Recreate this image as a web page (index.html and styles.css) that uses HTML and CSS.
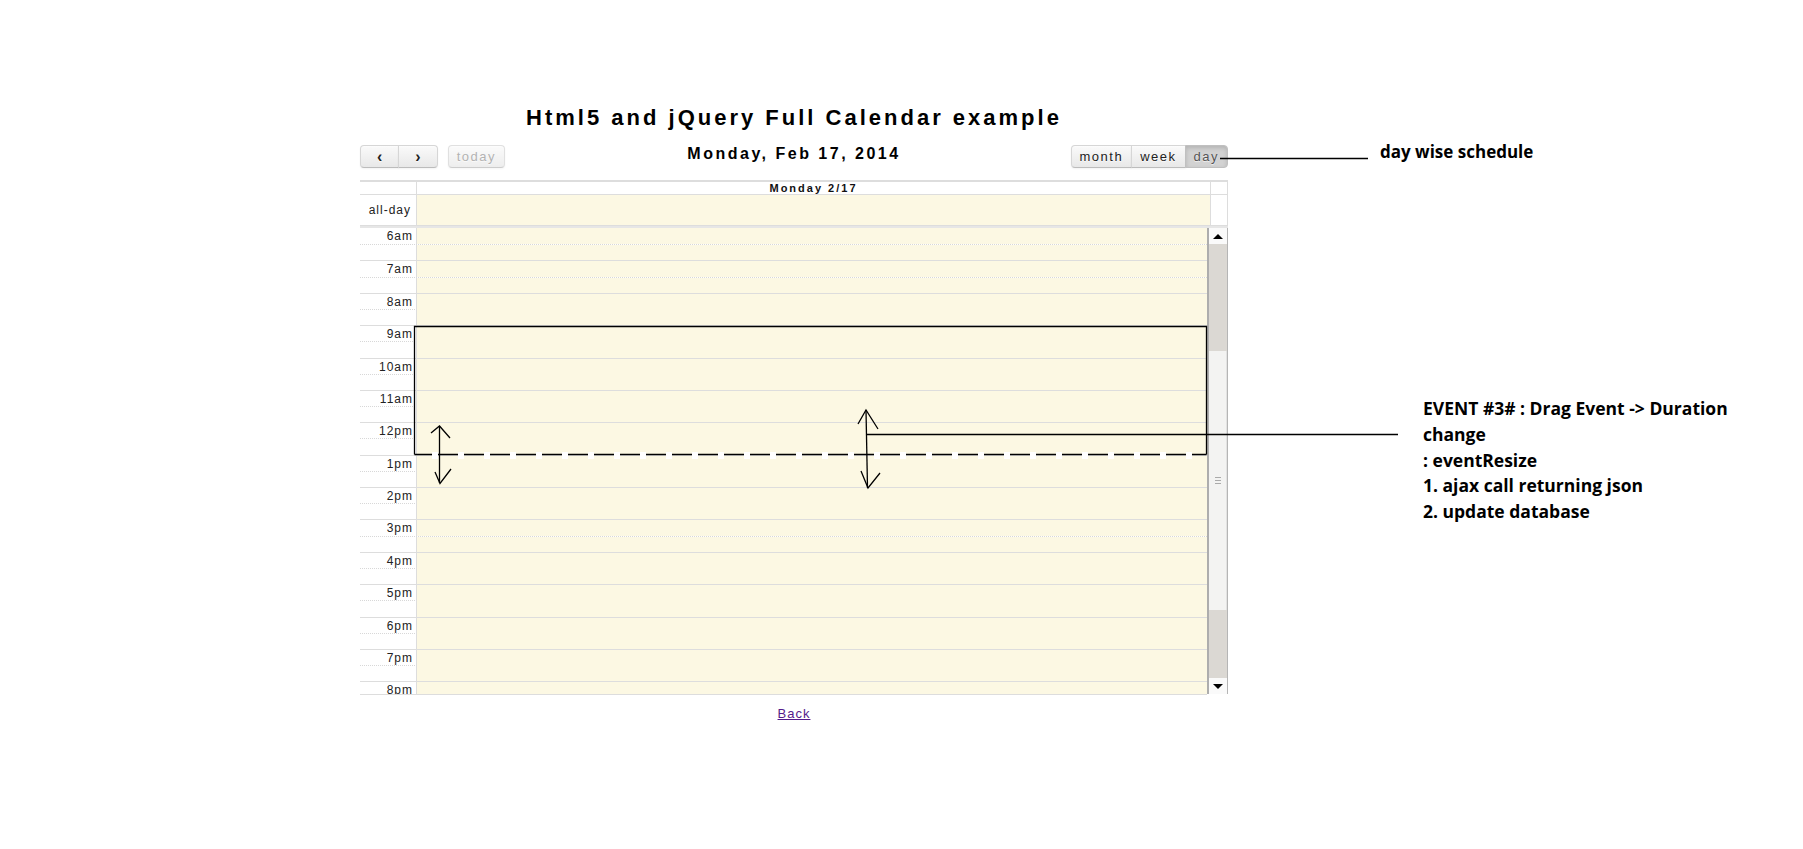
FILE: index.html
```html
<!DOCTYPE html>
<html lang="en">
  <head>
    <meta charset="UTF-8" />
    <meta name="viewport" content="width=device-width, initial-scale=1.0" />
    <title>Html5 and jQuery Full Calendar example</title>
    <link rel="stylesheet" href="styles.css">
  </head>
  <body>
    <div class="page">
      <h1>Html5 and jQuery Full Calendar example</h1>

      <div id="calendar" class="fc">
        <div class="fc-toolbar">
          <div class="fc-left">
            <span class="fc-group">
              <button class="fc-button corner-left">&lsaquo;</button><button class="fc-button corner-right">&rsaquo;</button>
            </span>
            <button class="fc-button fc-today corner-left corner-right">today</button>
          </div>
          <h2 class="fc-title">Monday, Feb 17, 2014</h2>
          <div class="fc-right">
            <span class="fc-group">
              <button class="fc-button fc-text corner-left">month</button><button class="fc-button fc-text">week</button><button class="fc-button fc-text fc-active corner-right">day</button>
            </span>
          </div>
        </div>

        <div class="fc-view">
          <div class="fc-row fc-head">
            <div class="fc-axis"></div>
            <div class="fc-day">Monday 2/17</div>
            <div class="fc-gutter"></div>
          </div>
          <div class="fc-row fc-allday">
            <div class="fc-axis">all-day</div>
            <div class="fc-day"></div>
            <div class="fc-gutter"></div>
          </div>
          <div class="fc-divider"></div>
          <div class="fc-body">
            <div class="fc-slots" id="slots"></div>
            <div class="scrollbar">
              <div class="scroll-btn"><span class="tri-up"></span></div>
              <div class="scroll-track">
                <div class="scroll-thumb"><span class="grip"></span></div>
              </div>
              <div class="scroll-btn"><span class="tri-down"></span></div>
            </div>
          </div>
        </div>
      </div>

      <p class="back"><a href="#">Back</a></p>
    </div>

    <!-- hand drawn notes on top of the screenshot -->
    <svg class="annotations" width="1803" height="849" viewBox="0 0 1803 849">
      <g fill="none" stroke="#000" stroke-width="1.3">
        <path d="M1220 158.5 H1368" />
        <path d="M414.5 454.5 V326.5 H1206.5 V454.5" />
        <path d="M414.5 454.5 H1206.5" stroke-width="1.5" />
      </g>
      <path d="M432 455.5 H1200" stroke="#fff" stroke-width="7" stroke-dasharray="6 20" fill="none" />
      <g fill="none" stroke="#000" stroke-width="1.3">
        <path d="M866 434.5 H1398" />
        <path d="M439.5 426 V483" />
        <path d="M431 433 L439.5 426 L450 438" />
        <path d="M435 472 L440 483.5 L451 469" />
        <path d="M866 410 L867.5 488" />
        <path d="M858 424 L866 410 L878 429" />
        <path d="M861 471 L868 488 L880 473" />
      </g>
    </svg>

    <div class="note note-day">day wise schedule</div>
    <div class="note note-event">
      EVENT #3# : Drag Event -&gt; Duration<br>
      change<br>
      : eventResize<br>
      1. ajax call returning json<br>
      2. update database
    </div>

    <script>
      const horas = [
        "6am", "7am", "8am", "9am", "10am", "11am", "12pm",
        "1pm", "2pm", "3pm", "4pm", "5pm", "6pm", "7pm", "8pm",
      ];

      const slots = document.getElementById("slots");

      horas.forEach((hora) => {
        const cheia = document.createElement("div");
        cheia.className = "fc-slot fc-hour";
        const th = document.createElement("div");
        th.className = "fc-axis";
        th.textContent = hora;
        const td = document.createElement("div");
        td.className = "fc-cell";
        cheia.appendChild(th);
        cheia.appendChild(td);

        const meia = document.createElement("div");
        meia.className = "fc-slot fc-half";
        meia.innerHTML = '<div class="fc-axis"></div><div class="fc-cell"></div>';

        slots.appendChild(cheia);
        slots.appendChild(meia);
      });
    </script>
  </body>
</html>
```

FILE: styles.css
```css
body {
  margin: 0;
  background: #fff;
  font-family: "Liberation Sans", Arial, sans-serif;
  color: #333;
}
.page {
  width: 868px;
  margin-left: 360px;
  padding-top: 106px;
}
h1 {
  margin: 0;
  font-size: 22px;
  line-height: 24px;
  text-align: center;
  letter-spacing: 3px;
  color: #000;
}

/* toolbar */
.fc-toolbar {
  display: grid;
  grid-template-columns: 1fr auto 1fr;
  align-items: start;
  margin-top: 15px;
}
.fc-left {
  display: flex;
  gap: 10px;
}
.fc-right {
  display: flex;
  justify-content: flex-end;
}
.fc-group {
  display: flex;
}
.fc-title {
  margin: 0;
  font-size: 16px;
  line-height: 18px;
  letter-spacing: 2.5px;
  color: #000;
}
.fc-button {
  height: 23px;
  box-sizing: border-box;
  padding: 0 16px;
  margin: 0;
  font-family: "Liberation Sans", Arial, sans-serif;
  font-size: 16px;
  line-height: 19px;
  font-weight: bold;
  color: #222;
  background: linear-gradient(#fafafa, #e8e8e8);
  border: 1px solid #d6d6d6;
  border-bottom-color: #bcbcbc;
  border-radius: 0;
  box-shadow: inset 0 1px 0 rgba(255, 255, 255, 0.4), 0 1px 2px rgba(0, 0, 0, 0.05);
  text-shadow: 0 1px 1px rgba(255, 255, 255, 0.75);
}
.fc-group .fc-button + .fc-button {
  margin-left: -1px;
}
.fc-text,
.fc-today {
  padding: 0 8px;
  font-size: 13px;
  font-weight: normal;
  letter-spacing: 1.5px;
}
.fc-today {
  color: #999;
  opacity: 0.75;
}
.fc-active {
  background: #d2d2d2;
  border-color: #c0c0c0;
  box-shadow: inset 0 2px 4px rgba(0, 0, 0, 0.15);
  color: #555;
}
.corner-left {
  border-top-left-radius: 4px;
  border-bottom-left-radius: 4px;
}
.corner-right {
  border-top-right-radius: 4px;
  border-bottom-right-radius: 4px;
}

/* agenda day view */
.fc-view {
  margin-top: 12px;
}
.fc-row {
  display: grid;
  grid-template-columns: 57px 1fr 18px;
  border-top: 1px solid #ddd;
}
.fc-row .fc-axis {
  border-right: 1px solid #ddd;
}
.fc-row .fc-gutter {
  border-left: 1px solid #ddd;
  border-right: 1px solid #ddd;
}
.fc-head {
  height: 12px;
  border-top: 2px solid #ddd;
}
.fc-head .fc-day {
  font-size: 11px;
  font-weight: bold;
  line-height: 12px;
  letter-spacing: 2px;
  text-align: center;
  color: #111;
}
.fc-allday {
  height: 31px;
  box-sizing: border-box;
}
.fc-allday .fc-axis {
  font-size: 12px;
  line-height: 30px;
  text-align: right;
  padding-right: 5px;
  letter-spacing: 1px;
  color: #222;
}
.fc-allday .fc-day {
  background: #fcf8e3;
}
.fc-divider {
  height: 2px;
  border-top: 1px solid #ddd;
  background: #e6e6e6;
}
.fc-body {
  display: flex;
}
.fc-slots {
  flex: 1;
  height: 466px;
  overflow: hidden;
  border-bottom: 1px solid #ddd;
}
.fc-slot {
  display: grid;
  grid-template-columns: 57px 1fr;
  height: 16.2px;
  box-sizing: border-box;
}
.fc-hour {
  border-top: 1px solid #ddd;
}
.fc-hour:first-child {
  border-top: none;
}
.fc-half {
  border-top: 1px dotted #d8d8d8;
}
.fc-slot .fc-axis {
  border-right: 1px solid #ddd;
  font-size: 12px;
  line-height: 15px;
  padding-top: 1px;
  text-align: right;
  padding-right: 3px;
  letter-spacing: 1px;
  white-space: nowrap;
  color: #222;
}
.fc-cell {
  background: #fcf8e3;
}

/* old style scroll bar of the screenshot */
.scrollbar {
  width: 18px;
  height: 466px;
  display: flex;
  flex-direction: column;
  border-left: 2px solid #adadad;
  border-right: 1px solid #b5b5b5;
  background: #f4f4f4;
}
.scroll-btn {
  height: 16px;
  display: flex;
  align-items: center;
  justify-content: center;
  background: #fafafa;
}
.tri-up,
.tri-down {
  width: 0;
  height: 0;
  border-left: 5px solid transparent;
  border-right: 5px solid transparent;
}
.tri-up {
  border-bottom: 5px solid #000;
}
.tri-down {
  border-top: 5px solid #000;
}
.scroll-track {
  flex: 1;
  background: #dbd8d3;
}
.scroll-thumb {
  margin-top: 107px;
  height: 259px;
  background: #f3f3f2;
  border-right: 1px solid #e2e2e2;
  display: flex;
  align-items: center;
  justify-content: center;
}
.grip {
  width: 6px;
  height: 5px;
  border-top: 1px solid #aaa;
  border-bottom: 1px solid #aaa;
  background: linear-gradient(transparent 2px, #aaa 2px, #aaa 3px, transparent 3px);
}

.back {
  margin: 11px 0 0;
  text-align: center;
  font-size: 13px;
  line-height: 16px;
  letter-spacing: 1px;
}
.back a {
  color: #551a8b;
}

/* notes */
.annotations {
  position: absolute;
  top: 0;
  left: 0;
  pointer-events: none;
}
.note {
  position: absolute;
  font-family: "Open Sans", Lato, sans-serif;
  font-weight: bold;
  font-size: 17px;
  color: #000;
  white-space: nowrap;
}
.note-day {
  left: 1380px;
  top: 142px;
  line-height: 20px;
}
.note-event {
  left: 1423px;
  top: 396px;
  font-size: 17.5px;
  line-height: 25.8px;
}
```
